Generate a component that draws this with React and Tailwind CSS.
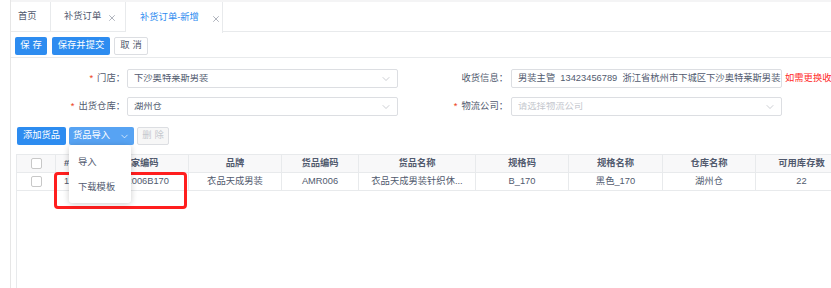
import React from 'react';
import { ChevronDown, X } from 'lucide-react';

const FONT = { fontFamily: '"Liberation Sans", "Noto Sans CJK SC", sans-serif' };

const columns = [
    { key: 'check', title: '', w: 'w-[39px]' },
    { key: 'idx', title: '#', w: 'w-[36px]', left: true },
    { key: 'code', title: '商家编码', w: 'w-[97px]' },
    { key: 'brand', title: '品牌', w: 'w-[93px]' },
    { key: 'sku', title: '货品编码', w: 'w-[77px]' },
    { key: 'name', title: '货品名称', w: 'w-[117px]' },
    { key: 'spec', title: '规格码', w: 'w-[93px]' },
    { key: 'specName', title: '规格名称', w: 'w-[94px]' },
    { key: 'wh', title: '仓库名称', w: 'w-[93px]' },
    { key: 'stock', title: '可用库存数', w: 'w-[92px]' },
];

const row = {
    idx: '1',
    code: 'AMR006B170',
    brand: '衣品天成男装',
    sku: 'AMR006',
    name: '衣品天成男装针织休...',
    spec: 'B_170',
    specName: '黑色_170',
    wh: '湖州仓',
    stock: '22',
};

const Checkbox = () => (
    <span className="block w-[11px] h-[11px] border border-[#c8c8c8] rounded-[2px] bg-white" />
);

const Label = ({ children, required, className }) => (
    <div className={`shrink-0 text-right text-[9.3px] leading-none whitespace-nowrap text-[#515a6e] ${className}`}>
        {required && <span className="text-[#ed4014] mr-[4px]">*</span>}
        {children}：
    </div>
);

const Select = ({ value, placeholder }) => (
    <div className="w-[271px] h-[19px] shrink-0 border border-[#dcdee2] rounded-[2px] flex items-center pl-[6px] pr-[5px] text-[9.3px] leading-none">
        <span className={`flex-1 truncate ${value ? 'text-[#515a6e]' : 'text-[#c5c8ce]'}`}>{value || placeholder}</span>
        <ChevronDown size={12} strokeWidth={1.3} className="text-[#b0b4bb]" />
    </div>
);

export default function App() {
    return (
        <div className="w-[831px] h-[288px] overflow-hidden bg-white flex" style={FONT}>
            <div className="w-[10px] shrink-0" />
            <div className="flex-1 min-w-0 flex flex-col border-l border-[#e6e6e6] relative overflow-hidden">
                {/* Tabs */}
                <div className="h-[32px] shrink-0 pt-[2px] bg-[#f4f4f5] flex border-b border-[#e8eaec] text-[9.3px] leading-none whitespace-nowrap">
                    <div className="h-full w-[40px] bg-white border-r border-[#e8eaec] flex items-center pl-[7px] text-[#515a6e]">首页</div>
                    <div className="h-full w-[75px] bg-white border-r border-[#e8eaec] flex items-center pl-[13px] text-[#515a6e]">
                        补货订单
                        <X size={10} strokeWidth={1.5} className="ml-[6px] mt-[2px] text-[#808695]" />
                    </div>
                    <div className="h-[31px] w-[97px] bg-white border-r border-[#e8eaec] flex items-center pl-[14px] text-[#2d8cf0]">
                        补货订单-新增
                        <X size={10} strokeWidth={1.5} className="ml-[12px] mt-[2px] text-[#808695]" />
                    </div>
                    <div className="flex-1 h-full bg-white" />
                </div>

                {/* Toolbar */}
                <div className="h-[26px] shrink-0 flex items-start pt-[5px] pl-[4px] gap-[5px] border-b border-[#e8eaec] text-[9.3px] leading-none whitespace-nowrap">
                    <button className="h-[18px] w-[32px] bg-[#2d8cf0] text-white rounded-[2px] tracking-[3px] pl-[3px]">保存</button>
                    <button className="h-[18px] w-[58px] bg-[#2d8cf0] text-white rounded-[2px]">保存并提交</button>
                    <button className="h-[18px] w-[34px] border border-[#dcdee2] bg-white text-[#515a6e] rounded-[2px] tracking-[3px] pl-[3px] -ml-[1px]">取消</button>
                </div>

                {/* Form */}
                <div className="pt-[11px] flex flex-col gap-[9px]">
                    <div className="flex items-center h-[19px]">
                        <Label required className="w-[115px] pr-[1px]">门店</Label>
                        <div className="ml-[1px]"><Select value="下沙奥特莱斯男装" /></div>
                        <Label className="w-[110px]">收货信息</Label>
                        <div className="ml-[3px] w-[271px] h-[19px] shrink-0 border border-[#dcdee2] rounded-[2px] flex items-center px-[6px] text-[9.3px] leading-none text-[#515a6e] overflow-hidden whitespace-nowrap">
                            男装主管&nbsp;&nbsp;13423456789&nbsp;&nbsp;浙江省杭州市下城区下沙奥特莱斯男装
                        </div>
                        <span className="ml-[3px] text-[9.3px] leading-none text-[#ff2a2a] whitespace-nowrap">如需更换收货信息</span>
                    </div>
                    <div className="flex items-center h-[19px]">
                        <Label required className="w-[115px] pr-[1px]">出货仓库</Label>
                        <div className="ml-[1px]"><Select value="湖州仓" /></div>
                        <Label required className="w-[110px]">物流公司</Label>
                        <div className="ml-[3px]"><Select placeholder="请选择物流公司" /></div>
                    </div>
                </div>

                {/* Item actions */}
                <div className="mt-[11px] h-[18px] flex items-center pl-[6px] gap-[3px] text-[9.3px] leading-none whitespace-nowrap">
                    <button className="h-[18px] w-[49px] bg-[#2d8cf0] text-white rounded-[2px]">添加货品</button>
                    <button className="h-[18px] w-[65px] bg-[#57a3f3] text-white rounded-[2px] flex items-center justify-center gap-[9px]">
                        货品导入
                        <ChevronDown size={11} strokeWidth={1.5} />
                    </button>
                    <button className="h-[18px] w-[32px] border border-[#dcdee2] bg-[#f7f7f7] text-[#c5c8ce] rounded-[2px] tracking-[3px] pl-[3px]">删除</button>
                </div>

                {/* Table */}
                <div className="mt-[9px] ml-[5px] flex-1 border-l border-[#e8eaec] overflow-hidden text-[9.3px] leading-none whitespace-nowrap">
                    <div className="flex h-[19px] bg-[#f8f8f9] border-y border-[#e8eaec]">
                        {columns.map((c) => (
                            <div key={c.key} className={`${c.w} shrink-0 h-full border-r border-[#e8eaec] flex items-center ${c.left ? 'pl-[8px]' : 'justify-center'} font-bold text-[#515a6e]`}>
                                {c.key === 'check' ? <Checkbox /> : c.title}
                            </div>
                        ))}
                    </div>
                    <div className="flex h-[18px] border-b border-[#e8eaec]">
                        {columns.map((c) => (
                            <div key={c.key} className={`${c.w} shrink-0 h-full border-r border-[#e8eaec] flex items-center ${c.left ? 'pl-[8px]' : 'justify-center'} text-[#515a6e] overflow-hidden`}>
                                {c.key === 'check' ? <Checkbox /> : row[c.key]}
                            </div>
                        ))}
                    </div>
                </div>

                {/* Highlight box */}
                <div className="absolute left-[43px] top-[172px] w-[133px] h-[37px] border-[3px] border-[#ff1e1e] rounded-[4px]" />

                {/* Import dropdown */}
                <div className="absolute left-[58px] top-[145px] w-[62px] h-[58px] bg-white rounded-[3px] shadow-[0_1px_6px_rgba(0,0,0,0.2)] flex flex-col pt-[7px] text-[9.3px] leading-none whitespace-nowrap text-[#515a6e]">
                    <div className="h-[22px] flex items-center pl-[9px]">导入</div>
                    <div className="h-[28px] flex items-center pl-[9px]">下载模板</div>
                </div>
            </div>
        </div>
    );
}
